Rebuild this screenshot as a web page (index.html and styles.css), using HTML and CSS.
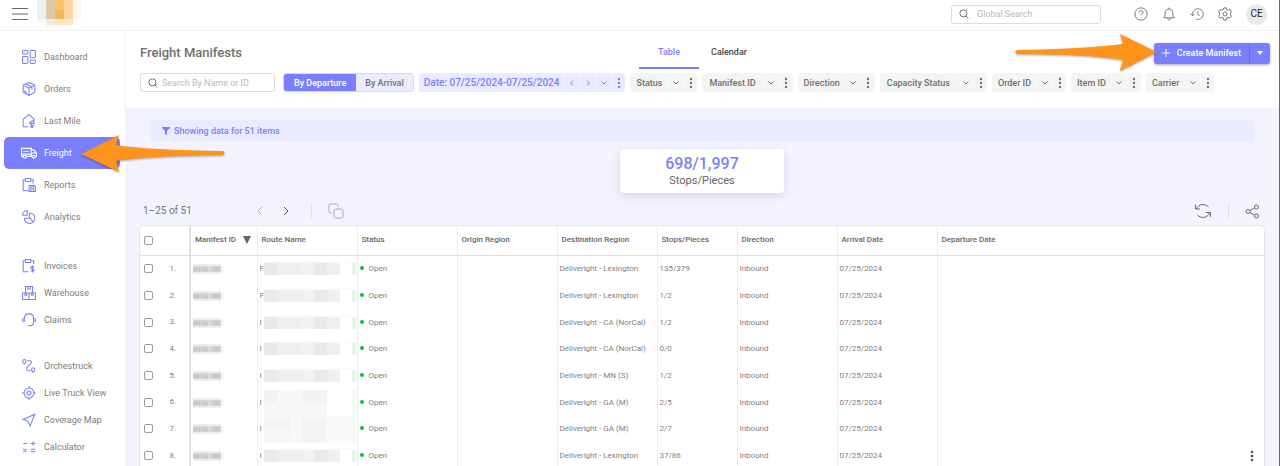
FILE: index.html
```html
<!DOCTYPE html>
<html lang="en">
<head>
<meta charset="utf-8">
<title>Freight Manifests</title>
<link rel="stylesheet" href="styles.css">
</head>
<body>
<svg class="defs" aria-hidden="true">
  <symbol id="chev" viewBox="0 0 8 8"><path d="M1.500 2.500L4 5l2.500-2.500"/></symbol>
  <symbol id="dots" viewBox="0 0 4 12"><circle cx="2" cy="2" r="1.200"/><circle cx="2" cy="6" r="1.200"/><circle cx="2" cy="10" r="1.200"/></symbol>
  <symbol id="lens" viewBox="0 0 24 24"><circle cx="10.500" cy="10.500" r="8.500"/><path d="M16.500 16.500l6 6"/></symbol>
  <symbol id="idmask" viewBox="0 0 32 12"><path fill="#ededed" d="M0 1h28v2H0zM0 9h28v2H0z"/><path fill="#d4d4d4" d="M0 3h28v6H0z"/><path fill="#c9c9c9" d="M0 5h7v3H0zM9 5h6v3H9zM19 4h7v4h-7z"/><path fill="#dadada" d="M15 3h3v6h-3z"/><path fill="#f7f7f7" d="M28 3h3v6h-3z"/></symbol>
  <symbol id="namemask" viewBox="0 0 92 16"><path fill="#fafafa" d="M0 0h88v2H0z"/><path fill="#efefef" d="M0 2h76v12H0z"/><path fill="#e9e9e9" d="M0 2h13v12H0zM50 2h13v12H50z"/><path fill="#f2f2f2" d="M38 2h12v12H38z"/><path fill="#e6f7e9" d="M88 2h4v12h-4z"/></symbol>
  <symbol id="blockmask" viewBox="0 0 92 27"><path fill="#f9f9f9" d="M0 0h88v27H0z"/><path fill="#f3f3f3" d="M0 1h26v13H0zM38 1h25v25H38z"/><path fill="#f6f6f6" d="M0 14h26v12H0z"/><path fill="#f0faf2" d="M88 0h4v27h-4z"/></symbol>
  <symbol id="gapmask" viewBox="0 0 92 27"><path fill="#f7f7f7" d="M0 0h63v27H0z"/><path fill="#f2f2f2" d="M0 1h13v13H0zM38 1h25v13H38z"/><path fill="#f0faf2" d="M88 0h4v27h-4z"/></symbol>
</svg>

<header class="topbar">
  <button class="plain menu" aria-label="Menu"><svg width="16" height="14" viewBox="0 0 16 14"><path d="M0 1.500h16M0 7h16M0 12.500h16"/></svg></button>
  <svg class="logo" width="46" height="28" viewBox="0 0 46 28" role="img" aria-label="Company logo"><path fill="#edf0f0" d="M1 0h9v19H1z"/><path fill="#f8f8f8" d="M0 19h10v5H0z"/><path fill="#dfcaa6" d="M10 0h9v19h-9z"/><path fill="#fac26d" d="M19 0h9v10h-9z"/><path fill="#f8b557" d="M19 10h9v9h-9z"/><path fill="#fdd49d" d="M28 0h9v19h-9z"/><path fill="#fff5ec" d="M37 0h8v19h-8z"/><path fill="#f2ece1" d="M10 19h9v6h-9z"/><path fill="#fde6c8" d="M19 19h18v6H19z"/><path fill="#fff8f0" d="M9 25h21v3H9z"/></svg>
  <label class="search global"><svg width="10" height="10"><use href="#lens"/></svg><input type="text" placeholder="Global Search" aria-label="Global Search"></label>
  <div class="tools">
    <button class="plain" aria-label="Help"><svg width="14" height="14" viewBox="0 0 24 24"><circle cx="12" cy="12" r="10.500"/><path d="M8.500 9.500c0-4.500 7-4.500 7-.500 0 2.500-3.500 2.500-3.500 5.500M12 17v1.500"/></svg></button>
    <button class="plain" aria-label="Notifications"><svg width="14" height="14" viewBox="0 0 24 24"><path d="M3 18.500h18c-2-2-2.500-3-2.500-8.500 0-4-2.500-6.500-6.500-6.500S5.500 6 5.500 10c0 5.500-.500 6.500-2.500 8.500zM12 1v2.500M9.500 19c0 4 5 4 5 0"/></svg></button>
    <button class="plain" aria-label="History"><svg width="14" height="14" viewBox="0 0 26 24"><path d="M5 15a10 10 0 1 1 6 6.500M1 11l4 4.500L9 11M14.500 6.500v6.500l3.500 2"/></svg></button>
    <button class="plain" aria-label="Settings"><svg width="14" height="14" viewBox="0 0 24 24"><circle cx="12" cy="12" r="3.500"/><path d="M10 1.500h4l1 3 2.500 1 3-1.500 2.500 3-1.500 3v3l1.500 3-2.500 3-3-1.500-2.500 1-1 4h-4l-1-4-2.500-1-3 1.500L1 16l1.500-3v-3L1 7l2.500-3 3 1.500 2.500-1z"/></svg></button>
    <button class="avatar">CE</button>
  </div>
</header>

<div class="shell">
<nav class="sidebar" aria-label="Main">
  <ul class="group wide">
    <li><a href="#"><svg viewBox="0 0 24 24"><rect x="1" y="1" width="9" height="6" rx="1.500"/><rect x="1" y="11" width="9" height="12" rx="1.500"/><rect x="14" y="1" width="9" height="12" rx="1.500"/><rect x="14" y="17" width="9" height="6" rx="1.500"/></svg>Dashboard</a></li>
    <li><a href="#"><svg viewBox="0 0 24 24"><path d="M12 1l10 4.500v12L12 23 2 17.500v-12zM2 5.500l10 5 10-5M12 10.500V23M7 3.500l10 5V13M5 14v3l3 1.500"/></svg>Orders</a></li>
    <li><a href="#"><svg viewBox="0 0 24 24"><path d="M11 22H4c-1.500 0-2-.500-2-2V9l10-8 9 8v3M12 15h2l2 5h5M19 11l2 7M15 13l4-1 1 4-4 1z"/><circle cx="17" cy="22" r="1.500"/></svg>Last Mile</a></li>
    <li><a href="#" class="active" aria-current="page"><svg class="truck" viewBox="0 0 28 20"><path d="M4 16H1V2h17v14H9M1 12h17M18 5h5l4 5v6h-2M18 16h2M18 10h9M4 7h11"/><circle cx="6.500" cy="16.500" r="2.500"/><circle cx="22.500" cy="16.500" r="2.500"/></svg>Freight</a></li>
    <li><a href="#"><svg viewBox="0 0 24 24"><path d="M6 3H2v19h9M15 3h4v7M6 1h9v5H6z"/><path d="M12 13h9l2 2v8H12zM15 13v3h5v-3M15 23v-4h5v4"/></svg>Reports</a></li>
    <li><a href="#"><svg viewBox="0 0 24 24"><path d="M9 1v8H1c0-4.500 3.500-8 8-8zM13 5c5 0 9 4 9 9s-4 9-9 9-9-4-9-9h9V5M13 14l6 6"/></svg>Analytics</a></li>
  </ul>
  <ul class="group">
    <li><a href="#"><svg viewBox="0 0 24 24"><path d="M6 3H2v19h9M15 3h5v6M6 1h9v5H6z"/><path d="M21 14c-2-2-6-1-6 1s6 2 6 4-4 3-6 1M18 11v12"/></svg>Invoices</a></li>
    <li><a href="#"><svg viewBox="0 0 24 24"><path d="M6 1h12v11H6zM1 12h11v11H1zM12 12h11v11H12zM10 1v4h4V1M5 12v4h3v-4M16 12v4h3v-4"/></svg>Warehouse</a></li>
    <li><a href="#"><svg viewBox="0 0 24 24"><path d="M4 15V9c0-10 16-10 16 0v6c0 5-3 7-7 7M4 9c-4 0-4 6 0 6M20 9c4 0 4 6 0 6M13 22h-3"/></svg>Claims</a></li>
  </ul>
  <ul class="group">
    <li><a href="#"><svg viewBox="0 0 24 24"><path d="M4 9C0 5 1 1 4 1s4 4 0 8zM19 23c-4-4-3-8 0-8s4 4 0 8zM9 3h4c4 0 4 4 1 6l-4 4c-3 3-2 7 1 7h4"/></svg>Orchestruck</a></li>
    <li><a href="#"><svg viewBox="0 0 24 24"><circle cx="12" cy="12" r="8.500"/><circle cx="12" cy="12" r="3.500"/><path d="M12 0v4M12 20v4M0 12h4M20 12h4"/></svg>Live Truck View</a></li>
    <li><a href="#"><svg viewBox="0 0 24 24"><path d="M22 2L2 11l8 3 4 8z"/></svg>Coverage Map</a></li>
    <li><a href="#"><svg viewBox="0 0 24 24"><path d="M2 6h7M15 6h8M19 2v8M2 15l6 6M8 15l-6 6M15 16h8M15 20h8"/></svg>Calculator</a></li>
  </ul>
</nav>

<main class="content">
  <section class="head">
    <div class="titlebar">
      <h1>Freight Manifests</h1>
      <div class="tabs" role="tablist"><button role="tab" aria-selected="true" class="tab on">Table</button><button role="tab" aria-selected="false" class="tab">Calendar</button></div>
      <div class="create"><button class="make"><svg width="8" height="8" viewBox="0 0 8 8"><path d="M4 0v8M0 4h8"/></svg>Create Manifest</button><button class="more" aria-label="More create options"><svg width="6" height="4" viewBox="0 0 6 4"><path d="M0 0h6L3 4z"/></svg></button></div>
    </div>
    <div class="filters">
      <label class="search local"><svg width="10" height="10"><use href="#lens"/></svg><input type="text" placeholder="Search By Name or ID" aria-label="Search By Name or ID"></label>
      <div class="toggle"><button class="on">By Departure</button><button>By Arrival</button></div>
      <div class="chip date"><button class="name">Date: 07/25/2024-07/25/2024</button><button aria-label="Previous day"><svg width="8" height="8" viewBox="0 0 8 8"><path d="M5 1.500L2.500 4 5 6.500"/></svg></button><button aria-label="Next day"><svg width="8" height="8" viewBox="0 0 8 8"><path d="M3 1.500L5.500 4 3 6.500"/></svg></button><button aria-label="Open date"><svg width="8" height="8"><use href="#chev"/></svg></button><button class="kebab" aria-label="Date options"><svg width="4" height="12"><use href="#dots"/></svg></button></div>
      <div class="chip"><button class="name">Status</button><button aria-label="Open status"><svg width="8" height="8"><use href="#chev"/></svg></button><button class="kebab" aria-label="Status options"><svg width="4" height="12"><use href="#dots"/></svg></button></div>
      <div class="chip"><button class="name long">Manifest ID</button><button aria-label="Open manifest ID"><svg width="8" height="8"><use href="#chev"/></svg></button><button class="kebab" aria-label="Manifest ID options"><svg width="4" height="12"><use href="#dots"/></svg></button></div>
      <div class="chip"><button class="name">Direction</button><button aria-label="Open direction"><svg width="8" height="8"><use href="#chev"/></svg></button><button class="kebab" aria-label="Direction options"><svg width="4" height="12"><use href="#dots"/></svg></button></div>
      <div class="chip"><button class="name long">Capacity Status</button><button aria-label="Open capacity status"><svg width="8" height="8"><use href="#chev"/></svg></button><button class="kebab" aria-label="Capacity status options"><svg width="4" height="12"><use href="#dots"/></svg></button></div>
      <div class="chip"><button class="name">Order ID</button><button aria-label="Open order ID"><svg width="8" height="8"><use href="#chev"/></svg></button><button class="kebab" aria-label="Order ID options"><svg width="4" height="12"><use href="#dots"/></svg></button></div>
      <div class="chip"><button class="name">Item ID</button><button aria-label="Open item ID"><svg width="8" height="8"><use href="#chev"/></svg></button><button class="kebab" aria-label="Item ID options"><svg width="4" height="12"><use href="#dots"/></svg></button></div>
      <div class="chip"><button class="name">Carrier</button><button aria-label="Open carrier"><svg width="8" height="8"><use href="#chev"/></svg></button><button class="kebab" aria-label="Carrier options"><svg width="4" height="12"><use href="#dots"/></svg></button></div>
    </div>
  </section>

  <section class="body">
    <p class="banner"><svg width="8" height="8" viewBox="0 0 8 8"><path d="M0 0h8v1L5 4v4L3 7V4L0 1z"/></svg>Showing data for 51 items</p>
    <div class="stat"><strong>698/1,997</strong><span>Stops/Pieces</span></div>
    <div class="toolbar">
      <span class="range">1–25 of 51</span>
      <button class="plain faint" aria-label="Previous page"><svg width="10" height="10" viewBox="0 0 10 10"><path d="M7 1L3 5l4 4"/></svg></button>
      <button class="plain next" aria-label="Next page"><svg width="10" height="10" viewBox="0 0 10 10"><path d="M3 1l4 4-4 4"/></svg></button>
      <i class="rule wide-gap"></i>
      <button class="plain faint" aria-label="Copy"><svg width="16" height="16" viewBox="0 0 16 16"><rect x="6" y="6" width="9" height="9" rx="2"/><path d="M4 10H3c-1.500 0-2-.500-2-2V3c0-1.500.500-2 2-2h5c1.500 0 2 .500 2 2v1"/></svg></button>
      <span class="space"></span>
      <button class="plain" aria-label="Refresh"><svg width="18" height="16" viewBox="0 0 18 16"><path d="M2.500 6C4 1 11 0 14.500 4M15.500 9.500C14 15 7 16 3.500 12M1.500 1.500V6H6M16.500 14V9.500H12"/></svg></button>
      <i class="rule"></i>
      <button class="plain" aria-label="Share"><svg width="15" height="15" viewBox="0 0 15 15"><circle cx="3" cy="7.500" r="2"/><circle cx="11.500" cy="3" r="2"/><circle cx="11.500" cy="12" r="2"/><path d="M5 6.500l4.500-2.500M5 8.500l4.500 2.500"/></svg></button>
    </div>
    <div class="panel">
    <table>
      <colgroup><col class="c-pick"><col class="c-id"><col class="c-std"><col class="c-std"><col class="c-std"><col class="c-std"><col class="c-stops"><col class="c-std"><col class="c-std"><col></colgroup>
      <thead><tr><th class="pick"><input type="checkbox" aria-label="Select all"></th><th class="sort">Manifest ID<svg width="8" height="8" viewBox="0 0 8 8"><path d="M0 0h8L4 8z"/></svg></th><th>Route Name</th><th>Status</th><th>Origin Region</th><th>Destination Region</th><th>Stops/Pieces</th><th>Direction</th><th>Arrival Date</th><th>Departure Date</th></tr></thead>
      <tbody>
        <tr><td class="pick"><input type="checkbox" aria-label="Select row 1"><span>1.</span></td><td class="mask"><svg width="32" height="12"><use href="#idmask"/></svg></td><td class="route"><div>F<svg width="92" height="16"><use href="#namemask"/></svg></div></td><td class="state">Open</td><td></td><td>Deliveright - Lexington</td><td>135/379</td><td>Inbound</td><td>07/25/2024</td><td></td></tr>
        <tr><td class="pick"><input type="checkbox" aria-label="Select row 2"><span>2.</span></td><td class="mask"><svg width="32" height="12"><use href="#idmask"/></svg></td><td class="route"><div>F<svg width="92" height="16"><use href="#namemask"/></svg></div></td><td class="state">Open</td><td></td><td>Deliveright - Lexington</td><td>1/2</td><td>Inbound</td><td>07/25/2024</td><td></td></tr>
        <tr><td class="pick"><input type="checkbox" aria-label="Select row 3"><span>3.</span></td><td class="mask"><svg width="32" height="12"><use href="#idmask"/></svg></td><td class="route"><div>I<svg width="92" height="16"><use href="#namemask"/></svg></div></td><td class="state">Open</td><td></td><td>Deliveright - CA (NorCal)</td><td>1/2</td><td>Inbound</td><td>07/25/2024</td><td></td></tr>
        <tr><td class="pick"><input type="checkbox" aria-label="Select row 4"><span>4.</span></td><td class="mask"><svg width="32" height="12"><use href="#idmask"/></svg></td><td class="route"><div>I<svg width="92" height="16"><use href="#namemask"/></svg></div></td><td class="state">Open</td><td></td><td>Deliveright - CA (NorCal)</td><td>0/0</td><td>Inbound</td><td>07/25/2024</td><td></td></tr>
        <tr><td class="pick"><input type="checkbox" aria-label="Select row 5"><span>5.</span></td><td class="mask"><svg width="32" height="12"><use href="#idmask"/></svg></td><td class="route"><div>I<svg width="92" height="16"><use href="#namemask"/></svg></div></td><td class="state">Open</td><td></td><td>Deliveright - MN (S)</td><td>1/2</td><td>Inbound</td><td>07/25/2024</td><td></td></tr>
        <tr><td class="pick"><input type="checkbox" aria-label="Select row 6"><span>6.</span></td><td class="mask"><svg width="32" height="12"><use href="#idmask"/></svg></td><td class="route"><div>I<svg width="92" height="27"><use href="#gapmask"/></svg></div></td><td class="state">Open</td><td></td><td>Deliveright - GA (M)</td><td>2/5</td><td>Inbound</td><td>07/25/2024</td><td></td></tr>
        <tr><td class="pick"><input type="checkbox" aria-label="Select row 7"><span>7.</span></td><td class="mask"><svg width="32" height="12"><use href="#idmask"/></svg></td><td class="route"><div>I<svg width="92" height="27"><use href="#blockmask"/></svg></div></td><td class="state">Open</td><td></td><td>Deliveright - GA (M)</td><td>2/7</td><td>Inbound</td><td>07/25/2024</td><td></td></tr>
        <tr><td class="pick"><input type="checkbox" aria-label="Select row 8"><span>8.</span></td><td class="mask"><svg width="32" height="12"><use href="#idmask"/></svg></td><td class="route"><div>I<svg width="92" height="16"><use href="#namemask"/></svg></div></td><td class="state">Open</td><td></td><td>Deliveright - Lexington</td><td>37/86</td><td>Inbound</td><td>07/25/2024</td><td class="last"><button class="plain" aria-label="Row actions"><svg width="4" height="12"><use href="#dots"/></svg></button></td></tr>
      </tbody>
    </table>
    </div>
  </section>
</main>
</div>

<svg class="arrow to-freight" width="148" height="42" viewBox="0 0 148 42" aria-hidden="true"><path d="M1 21L39 2l-3 10q30 5 107 6 3 1.500 0 4-77 1-107 6l3 11z"/></svg>
<svg class="arrow to-create" width="146" height="42" viewBox="0 0 146 42" aria-hidden="true"><path d="M143 20L106 2l3 10q-40 5-106 6-3 2 0 4 70 0 106 6l-3 11z"/></svg>
</body>
</html>
```
FILE: styles.css
```css
* { box-sizing: border-box; }
body {
  margin: 0;
  height: 100vh;
  overflow: hidden;
  display: flex;
  flex-direction: column;
  position: relative;
  border-right: 1px solid #66666c;
  background: #fff;
  color: #777;
  font: 9px/12px Roboto, "Liberation Sans", sans-serif;
}
button, input { font: inherit; color: inherit; margin: 0; }
button { border: 0; padding: 0; background: none; cursor: pointer; }
svg { display: block; flex: none; fill: none; stroke: currentColor; }
.defs { position: absolute; width: 0; height: 0; }
.plain { display: flex; align-items: center; justify-content: center; }

.topbar {
  flex: none;
  display: flex;
  align-items: center;
  height: 31px;
  padding: 0 12px 2px;
  border-bottom: 1px solid #f1f1f3;
}
.menu svg { stroke: #666; stroke-width: 1; }
.logo { stroke: none; margin-left: 8px; align-self: flex-start; }
.search {
  display: flex;
  align-items: center;
  border: 1px solid #dcdcdc;
  border-radius: 3px;
  height: 19px;
  padding-left: 7px;
  background: #fff;
}
.search svg { stroke: #555; stroke-width: 2; }
.search input { flex: 1; min-width: 0; border: 0; outline: 0; padding: 0; background: none; }
.search input::placeholder { color: #b9b9b9; opacity: 1; }
.global { width: 150px; margin-left: auto; gap: 8px; }
.tools { display: flex; align-items: center; gap: 14px; margin-left: 33px; color: #666; }
.tools svg { stroke-width: 1.5; }
.avatar {
  width: 21px;
  height: 21px;
  border-radius: 50%;
  background: #e9e9e9;
  color: #222;
  font-size: 10px;
}

.shell { flex: 1; min-height: 0; display: flex; }
.sidebar {
  flex: none;
  width: 126px;
  padding: 10px 5px 0 4px;
  border-right: 1px solid #f3f3f5;
}
.group { list-style: none; margin: 0 0 19px; padding: 0; }
.group a {
  display: flex;
  align-items: center;
  gap: 8px;
  height: 27px;
  padding-left: 18px;
  border-radius: 5px;
  color: #7c7c7c;
  text-decoration: none;
}
.wide a { height: 32px; }
.group svg { width: 14px; height: 14px; stroke: #7a7fff; stroke-width: 1.8; }
.group .active { background: #7a7fff; color: #fff; padding-left: 17px; gap: 7px; }
.group .truck { width: 16px; height: 12px; stroke: #fff; stroke-width: 2; }

.content { flex: 1; min-width: 0; display: flex; flex-direction: column; }
.head { flex: none; padding: 6px 9px 16px 14px; }
.titlebar { display: grid; grid-template-columns: 499fr 120px 511fr; align-items: center; height: 32px; }
h1 { margin: 0; font-size: 13px; line-height: 16px; font-weight: 500; color: #6f6f6f; }
.tabs { display: flex; align-self: stretch; }
.tab { flex: 1; border-bottom: 2px solid transparent; font-weight: 500; color: #4a4a4a; }
.tab.on { color: #7a7fff; border-color: #7a7fff; }
.create {
  justify-self: end;
  display: flex;
  height: 21px;
  border-radius: 3px;
  background: #7a7fff;
  color: #fff;
  box-shadow: 0 1px 3px rgba(0, 0, 0, .35);
}
.make { display: flex; align-items: center; gap: 7px; padding: 0 8px; font-weight: 500; }
.more { display: grid; place-items: center; width: 21px; border-left: 1px solid #6469e0; }
.more svg { fill: #fff; stroke: none; }

.filters { display: flex; align-items: center; gap: 5px; padding-top: 4px; }
.local { width: 135px; gap: 4px; margin-right: 3px; }
.toggle { display: flex; height: 19px; border: 1px solid #d8d8ec; border-radius: 3px; overflow: hidden; font-weight: 500; }
.toggle button { padding: 0 9px; background: #ebebff; color: #707070; }
.toggle .on { background: #7a7fff; color: #fff; padding: 0 10px; }
.chip {
  display: flex;
  height: 19px;
  border-radius: 3px;
  overflow: hidden;
  background: #f4f4f4;
  color: #6f6f6f;
  font-weight: 500;
}
.chip button { display: grid; place-items: center; width: 16px; }
.chip .name { width: auto; padding: 0 5px 0 6px; }
.chip .long { padding: 0 7px; }
.chip .kebab { width: 14px; }
.chip button + button { border-left: 1px solid #f9f9f9; }
.chip.date { background: #ebebff; color: #7a7fff; font-size: 10px; }
.chip.date .name { padding: 0 4px 0 5px; }
.chip.date button + button { border-color: #f2f2ff; }
.kebab svg, .last svg { fill: currentColor; stroke: none; }

.body { flex: 1; min-height: 0; display: flex; flex-direction: column; padding: 12px 14px 0 13px; background: #f3f3ff; }
.banner {
  flex: none;
  display: flex;
  align-items: center;
  gap: 4px;
  height: 21px;
  margin: 0 10px 0 11px;
  padding-left: 12px;
  border-radius: 4px;
  background: #eaebff;
  color: #7a7fff;
  font-weight: 500;
}
.banner svg { fill: currentColor; stroke: none; }
.stat {
  flex: none;
  align-self: center;
  display: flex;
  flex-direction: column;
  align-items: center;
  width: 164px;
  margin-top: 8px;
  padding: 5px 0 4px;
  border-radius: 4px;
  background: #fff;
  box-shadow: 0 3px 8px rgba(60, 60, 110, .16);
  font-size: 11px;
  line-height: 16px;
  color: #666;
}
.stat strong { font-size: 16px; line-height: 19px; font-weight: 500; color: #7a7fff; }
.toolbar { flex: none; display: flex; align-items: center; height: 28px; margin-top: 4px; padding: 0 5px 0 4px; gap: 16px; color: #666; }
.range { width: 96px; font-size: 10px; color: #757575; }
.faint { color: #aaa; }
.next { color: #555; }
.rule { width: 1px; height: 16px; background: #dedee6; }
.toolbar .wide-gap { margin-left: 4px; }
.space { flex: 1; }

.panel { flex: 1; min-height: 0; overflow: hidden; border: 1px solid #e4e4ea; border-bottom: 0; border-radius: 5px 5px 0 0; background: #fff; }
table { width: 100%; table-layout: fixed; border-collapse: collapse; font-size: 8px; line-height: 10px; }
.c-pick { width: 50px; }
.c-id { width: 67px; }
.c-std { width: 100px; }
.c-stops { width: 80px; }
th, td { padding: 0 0 0 2px; text-align: left; white-space: nowrap; border-left: 1px solid #ececec; }
th { height: 29px; padding-left: 4px; font-weight: 500; color: #666; border-bottom: 1px solid #dedede; }
td { height: 27px; color: #808080; }
tr:nth-child(3n) td, tr:nth-child(3n) .route div { height: 26px; }
.pick { padding-left: 4px; border-left: 0; }
th:nth-child(2), td:nth-child(2) { border-left: 2px solid #e2e2e2; }
.pick input {
  appearance: none;
  width: 9px;
  height: 9px;
  border: 1px solid #9a9a9a;
  border-radius: 2px;
  vertical-align: middle;
  background: #fff;
}
.pick span { display: inline-block; width: 23px; text-align: right; vertical-align: middle; }
.sort svg { display: inline-block; margin-left: 7px; fill: #666; stroke: none; vertical-align: middle; }
.mask svg, .route svg { stroke: none; }
.route div { display: flex; align-items: center; height: 27px; overflow: hidden; }
.route svg { margin: 0 1px 0 auto; }
.state::before {
  content: "";
  display: inline-block;
  width: 4px;
  height: 4px;
  margin: 0 5px 1px 0;
  border-radius: 50%;
  background: #0bbd3b;
  vertical-align: middle;
}
.last button { margin: 0 10px 0 auto; color: #444; }

.arrow { position: absolute; filter: drop-shadow(0 1px 1px rgba(0, 0, 0, .35)); pointer-events: none; }
.arrow path { fill: #ff931b; stroke: none; }
.to-freight { left: 80px; top: 133px; }
.to-create { right: 119px; top: 32px; }
```
